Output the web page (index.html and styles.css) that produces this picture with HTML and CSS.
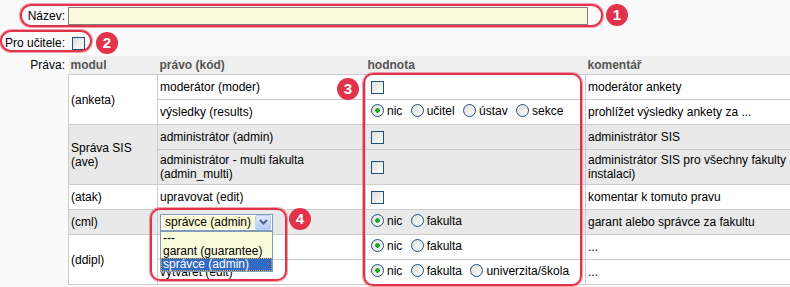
FILE: index.html
```html
<!DOCTYPE html>
<html lang="cs">
<head>
    <meta charset="UTF-8">
    <meta name="viewport" content="width=device-width, initial-scale=1.0">
    <title>Role – práva</title>
    <link rel="stylesheet" href="styles.css">
</head>
<body>
    <div class="page">
        <div class="field field-name">
            <label class="lbl" for="nazev">Název:</label>
            <input class="text" id="nazev" type="text">
        </div>

        <div class="field field-teacher">
            <label class="lbl" for="ucitel">Pro učitele:</label>
            <input class="cb" id="ucitel" type="checkbox">
        </div>

        <div class="field field-rights">
            <span class="lbl">Práva:</span>
            <table class="rights">
                <colgroup>
                    <col class="c-mod"><col class="c-right"><col class="c-val"><col class="c-com">
                </colgroup>
                <tr>
                    <th>modul</th>
                    <th>právo (kód)</th>
                    <th>hodnota</th>
                    <th>komentář</th>
                </tr>
                <tr>
                    <td rowspan="2">(anketa)</td>
                    <td>moderátor (moder)</td>
                    <td class="val"><input class="cb" type="checkbox"></td>
                    <td>moderátor ankety</td>
                </tr>
                <tr>
                    <td>výsledky (results)</td>
                    <td class="val">
                        <label class="opt"><input class="rb" type="radio" name="results" checked>nic</label>
                        <label class="opt"><input class="rb" type="radio" name="results">učitel</label>
                        <label class="opt"><input class="rb" type="radio" name="results">ústav</label>
                        <label class="opt"><input class="rb" type="radio" name="results">sekce</label>
                    </td>
                    <td>prohlížet výsledky ankety za ...</td>
                </tr>
                <tr class="alt">
                    <td rowspan="2">Správa SIS (ave)</td>
                    <td>administrátor (admin)</td>
                    <td class="val"><input class="cb" type="checkbox"></td>
                    <td>administrátor SIS</td>
                </tr>
                <tr class="alt">
                    <td>administrátor - multi fakulta (admin_multi)</td>
                    <td class="val"><input class="cb" type="checkbox"></td>
                    <td>administrátor SIS pro všechny fakulty (v multi instalaci)</td>
                </tr>
                <tr>
                    <td>(atak)</td>
                    <td>upravovat (edit)</td>
                    <td class="val"><input class="cb" type="checkbox"></td>
                    <td>komentar k tomuto pravu</td>
                </tr>
                <tr class="alt">
                    <td>(cml)</td>
                    <td>
                        <div class="select">
                            <span class="select-value">správce (admin)</span>
                            <span class="select-btn">
                                <svg width="9" height="6" viewBox="0 0 9 6"><path d="M1 1 L4.5 4.5 L8 1" fill="none" stroke="#4d6185" stroke-width="2"/></svg>
                            </span>
                            <ul class="select-list">
                                <li>---</li>
                                <li>garant (guarantee)</li>
                                <li class="sel">správce (admin)</li>
                            </ul>
                        </div>
                    </td>
                    <td class="val">
                        <label class="opt"><input class="rb" type="radio" name="cml" checked>nic</label>
                        <label class="opt"><input class="rb" type="radio" name="cml">fakulta</label>
                    </td>
                    <td>garant alebo správce za fakultu</td>
                </tr>
                <tr>
                    <td rowspan="2">(ddipl)</td>
                    <td>číst (read)</td>
                    <td class="val">
                        <label class="opt"><input class="rb" type="radio" name="dd1" checked>nic</label>
                        <label class="opt"><input class="rb" type="radio" name="dd1">fakulta</label>
                    </td>
                    <td>...</td>
                </tr>
                <tr>
                    <td>vytvářet (edit)</td>
                    <td class="val">
                        <label class="opt"><input class="rb" type="radio" name="dd2" checked>nic</label>
                        <label class="opt"><input class="rb" type="radio" name="dd2">fakulta</label>
                        <label class="opt"><input class="rb" type="radio" name="dd2">univerzita/škola</label>
                    </td>
                    <td>...</td>
                </tr>
            </table>
        </div>

        <!-- annotations -->
        <div class="mark mark-1"></div>
        <div class="mark mark-2"></div>
        <div class="mark mark-3"></div>
        <div class="mark mark-4"></div>
        <span class="badge badge-1">1</span>
        <span class="badge badge-2">2</span>
        <span class="badge badge-3">3</span>
        <span class="badge badge-4">4</span>
    </div>
</body>
</html>
```

FILE: styles.css
```css
body {
    margin: 0;
    background-color: #fafafa;
    font-family: "Liberation Sans", Arial, sans-serif;
    font-size: 12px;
    color: #000;
    overflow: hidden;
}
.page {
    position: relative;
    height: 287px;
}
.field {
    display: flex;
    align-items: center;
}
.lbl {
    flex: 0 0 68px;
    box-sizing: border-box;
    padding-right: 3px;
    text-align: right;
    line-height: 14px;
}
.field-name {
    padding-top: 7px;
}
.text {
    margin: 0;
    width: 520px;
    height: 18px;
    box-sizing: border-box;
    border: 1px solid #808080;
    background-color: #fafadc;
    padding: 0 2px;
    font: inherit;
}
.field-teacher {
    margin-top: 11px;
}
.field-teacher .cb {
    margin-left: 4px;
}
.field-rights {
    margin-top: 6px;
    align-items: flex-start;
}
.field-rights .lbl {
    padding-top: 2px;
}

/* form controls, XP look */
.cb, .rb {
    -webkit-appearance: none;
    appearance: none;
    width: 13px;
    height: 13px;
    margin: 0;
    box-sizing: border-box;
    border: 1px solid #1c5180;
    background: linear-gradient(135deg, #dcdcd7, #ffffff);
    vertical-align: middle;
}
.rb {
    border-radius: 50%;
    margin-right: 3px;
}
.rb:checked {
    background: radial-gradient(circle, #21a121 0, #21a121 2px, transparent 2.6px),
                linear-gradient(135deg, #dcdcd7, #ffffff);
}

/* rights table */
.rights {
    flex-shrink: 0;
    table-layout: fixed;
    width: 777px;
    border-collapse: collapse;
}
.c-mod { width: 89px; }
.c-right { width: 208px; }
.c-val { width: 220px; }
.c-com { width: 260px; }
.rights th {
    background-color: #efefef;
    color: #555;
    font-weight: bold;
    text-align: left;
    padding: 2px 2px;
    line-height: 14px;
    border-bottom: 1px solid #cccccc;
}
.rights td {
    background-color: #ffffff;
    border: 1px solid #cccccc;
    padding: 3px 2px;
    height: 18px;
    line-height: 14px;
    vertical-align: middle;
}
.rights tr.alt td {
    background-color: #e9e9e9;
}
.rights td.val {
    padding-left: 5px;
    white-space: nowrap;
}
.opt {
    display: inline-flex;
    align-items: center;
    margin-right: 5px;
}

/* fake select with open list */
.select {
    position: relative;
    width: 113px;
    height: 17px;
    box-sizing: border-box;
    border: 1px solid #7f9db9;
    background-color: #ffffff;
    display: flex;
    align-items: center;
    padding: 1px;
    gap: 1px;
}
.select-value {
    flex: 1;
    height: 13px;
    line-height: 13px;
    background-color: #fafad2;
    padding-left: 2px;
    margin-left: 1px;
}
.select-btn {
    width: 16px;
    height: 15px;
    box-sizing: border-box;
    border: 1px solid #b9cdf7;
    border-radius: 2px;
    background: linear-gradient(#dfe8fd, #b6c9f6);
    display: flex;
    align-items: center;
    justify-content: center;
}
.select-list {
    position: absolute;
    top: 16px;
    left: -1px;
    width: 113px;
    box-sizing: border-box;
    margin: 0;
    padding: 0;
    list-style: none;
    border: 1px solid #7f9db9;
    background-color: #fafadc;
    z-index: 2;
}
.select-list li {
    height: 13px;
    line-height: 13px;
    padding-left: 2px;
}
.select-list li.sel {
    background-color: #316ac5;
    color: #ffffff;
    outline: 1px dotted #e0a040;
    outline-offset: -1px;
}

/* annotation marks */
.mark {
    position: absolute;
    box-sizing: border-box;
    border: 2px solid #e2334a;
    box-shadow: 0 0 0 1px rgba(226, 51, 74, 0.45);
    border-radius: 11px;
    z-index: 3;
}
.mark-1 { left: 20px; top: 4px; width: 583px; height: 23px; }
.mark-2 { left: 0; top: 30px; width: 92px; height: 22px; }
.mark-3 { left: 363px; top: 73px; width: 219px; height: 213px; border-radius: 10px; }
.mark-4 { left: 150px; top: 208px; width: 137px; height: 73px; border-radius: 10px; }
.badge {
    position: absolute;
    width: 22px;
    height: 22px;
    border-radius: 50%;
    background-color: #e2334a;
    color: #ffffff;
    font-family: "Liberation Sans", Arial, sans-serif;
    font-weight: bold;
    font-size: 15px;
    line-height: 22px;
    text-align: center;
    z-index: 4;
}
.badge-1 { left: 606px; top: 4px; }
.badge-2 { left: 96px; top: 32px; }
.badge-3 { left: 337px; top: 78px; }
.badge-4 { left: 289px; top: 208px; }
```
